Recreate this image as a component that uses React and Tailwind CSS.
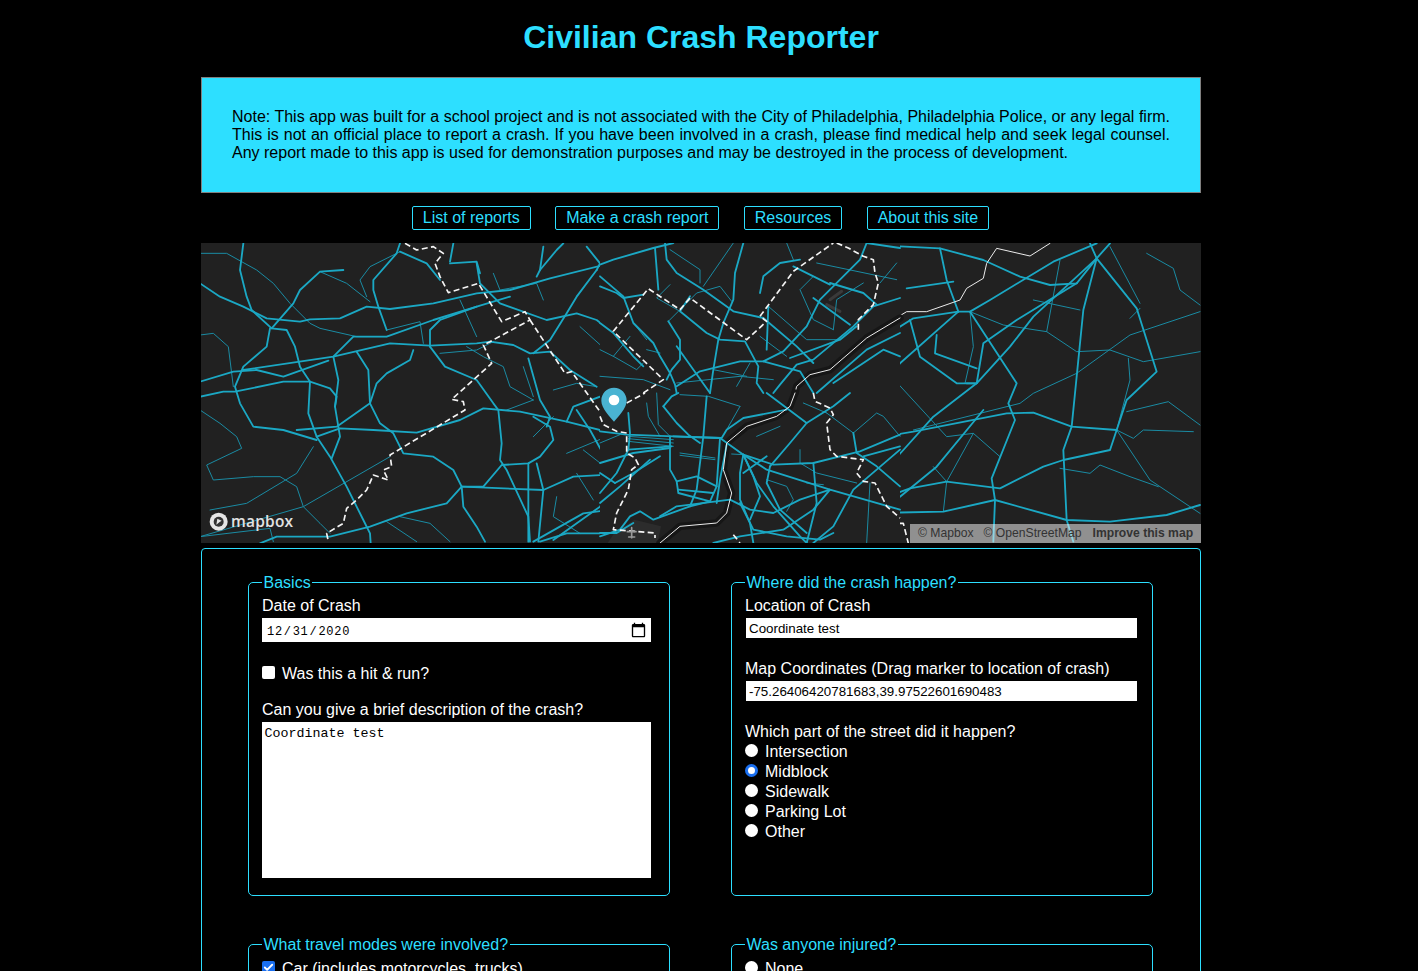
import React from 'react';
import { Check } from 'lucide-react';

// map traces, in 3x pixels of the map picture
const leftMajor = [
  'M0 130L60 170L130 200L200 235L300 245L330 238L420 235L500 200L570 207L700 190L830 160L930 150L1050 115L1210 75L1400 15',
  'M0 425L100 395L170 390L250 410L385 362',
  'M0 470L70 455L105 455L250 425L330 425L390 445L410 470L405 500',
  'M130 390L400 350L570 310L690 317L830 310L870 305L940 315L990 340L1050 335L1110 390L1190 440',
  'M130 10L120 90L140 170L155 210L215 265L260 270L285 320L300 380L330 425L325 520L350 590L390 650L440 740L490 840L510 880L512 910',
  'M210 265L200 320L130 380L105 440L120 490L160 560L250 570L350 600',
  'M430 90L360 95L300 150L280 190L215 265',
  'M560 270L535 200L520 150L520 120L590 40L600 10',
  'M350 590L420 565L520 570L650 578L780 540L850 505L960 515L1100 545L1280 590',
  'M400 350L415 420L405 500L420 590L395 655',
  'M400 350L460 290L560 290L700 240L830 200L930 170',
  'M470 335L505 390L510 490L540 550L580 580L610 640L700 650L760 690L785 740L790 800L830 860L855 905',
  'M640 330L630 360L560 400L530 430L510 490L410 560L290 570',
  'M690 320L735 380L830 420L880 490L895 510L905 610L900 660L920 690L985 830L990 905',
  'M690 320L690 270L720 240L830 200',
  'M1000 530L1050 560L1060 600L1020 650L985 670L905 675L850 740L785 740L740 790L620 820L510 860L390 890L230 890L180 910',
  'M985 670L985 780L985 905',
  'M1010 670L1030 750L1015 905',
  'M985 355L1020 480L1050 530L1040 560',
  'M785 740L1030 750L1120 710L1290 700L1390 620',
  'M1100 545L1120 500L1200 470',
  'M1130 510L1170 570L1220 660L1240 740L1300 800L1500 720',
  'M1060 900L1200 800L1240 740',
  'M830 70L840 130L900 190L1040 240L1130 220L1190 240L1280 310',
  'M750 70L830 65L840 100',
  'M600 35L680 70L720 120',
  'M760 10L750 65',
  'M1190 90L1130 170L1100 220L1050 300L1000 340',
  'M1160 20L1200 70L1190 90',
  'M1020 90L1070 30L1090 10',
  'M1030 20L1020 90L1010 110',
  'M1000 905L1150 820L1300 800',
  'M1240 880L1100 880L1020 905',
];
const leftMinor = [
  'M0 40L80 40L170 90L220 130L270 190L330 250L360 265L470 290L560 290',
  'M0 285L40 280L85 320L100 440',
  'M0 510L60 550L110 590L125 625L20 675L40 720L160 710L240 710L290 740L310 800L360 850L390 880',
  'M360 95L440 130L510 185',
  'M600 35L510 80L480 120L500 170',
  'M560 270L660 245L670 310',
  'M720 340L830 330L880 305',
  'M800 320L850 350L910 380L930 440L1000 480',
  'M1000 480L920 510',
  'M970 380L1000 470',
  'M1060 450L1130 430L1190 440',
  'M1000 590L1060 530',
  'M600 830L690 850L750 905',
  'M560 845L650 905',
  'M0 890L210 865L220 905',
  'M340 620L290 700L140 790L30 810',
  'M570 650L310 800L0 890',
  'M1100 640L1220 590',
  'M1150 630L1240 700',
  'M1070 770L1060 830L1140 880',
  'M1130 700L1180 780',
  'M1140 260L1240 350',
  'M880 100L900 150L1010 130L1030 180',
  'M780 180L830 290',
];
const rightMajor = [
  'M510 15L720 25L850 60L960 110L1050 135L1130 130L1190 55L1230 10',
  'M1170 10L1190 55L1310 205L1370 395L1280 480L1250 570L1230 630L1090 660L1030 680L900 745L740 725L630 745L550 775',
  'M1190 55L1150 210L1115 560L1090 630L1100 840L1120 905',
  'M1190 55L1000 230L930 320L830 430L700 530L610 630L480 770',
  'M1130 130L950 240L850 310L830 430L800 430',
  'M775 215L810 215L870 180L1060 65L1190 10',
  'M775 215L640 235L600 260',
  'M775 215L600 370',
  'M810 215L950 430L925 490L945 540L875 715L885 780L880 905',
  'M775 215L740 120L720 25',
  'M760 125L620 145',
  'M580 585L640 575L920 520L1000 518L1115 560L1250 570',
  'M600 770L710 680L850 510',
  'M1500 795L1400 825L1230 845L1100 840L885 780L730 815L580 818',
  'M710 285L705 340L830 385',
  'M630 240L660 350L770 430L830 430',
];
const rightMinor = [
  'M1230 20L1320 190',
  'M1340 40L1420 85L1440 150L1500 195',
  'M1500 215L1290 285L1130 400L1000 460L960 490L640 570',
  'M1500 335L1330 365L1230 330L1130 335L1040 275L910 255L810 215',
  'M1285 355L1290 420L1250 570L1350 720L1500 820',
  'M1500 555L1405 485L1280 515',
  'M1250 570L1300 595L1330 570L1480 575',
  'M1375 740L1290 710L1200 675L1170 700L1080 685',
  'M600 370L560 530',
  'M570 405L740 590L820 580L740 725',
  'M700 680L740 725L730 815',
  'M810 215L820 320L795 430',
  'M1000 180L1140 210',
  'M820 580L900 650',
  'M1040 275L1080 60',
  'M1320 205L1290 235',
];
const topMajor = [
  'M0 65L40 50L160 15L220 0',
  'M195 0L200 50L230 90L310 140L400 205L490 225L590 310L640 360',
  'M430 0L405 90L400 170L370 240L355 290L340 380L330 450',
  'M0 100L70 160L100 240L160 300L180 340L210 390L225 425L230 450',
  'M0 240L40 270L100 340L130 370',
  'M230 430L300 385L420 355L490 355L550 325L620 250L660 170L780 50L800 0',
  'M800 0L900 15',
  'M0 130L50 150L70 165L130 155',
  'M205 235L240 290L240 350L215 380L200 410',
  'M270 160L240 205L320 270L360 290L435 295L475 370L470 420L490 450',
  'M490 355L600 385L640 450',
  'M480 150L490 100L540 60L600 50',
  'M505 190L500 320',
  'M900 165L820 190L760 250L640 350L590 365L540 425L520 450',
  'M640 165L750 245',
  'M690 120L790 150L830 185',
  'M580 70L690 125',
  'M570 345L720 290L770 250',
  'M900 270L800 320L650 450',
  'M900 340L850 320L700 420',
  'M165 15L175 140',
  'M230 310L330 450',
];
const topMinor = [
  'M205 235L290 150L360 130L395 175',
  'M210 20L300 80L300 120','M400 0L310 130','M210 125L170 165L240 205',
  'M0 320L40 340L90 280','M40 340L110 380L130 360','M180 330L140 320','M100 240L140 290',
  'M230 420L420 400L520 410','M340 380L440 400','M450 360L410 430','M480 280L560 340',
  'M640 100L600 140L640 230L700 260','M700 260L710 170L790 120','M0 400L130 410L210 440',
  'M650 60L890 110','M890 60L840 120','M560 0L580 50','M505 190L620 290L720 290',
];
const bottomMajor = [
  'M0 115L80 125L220 130L360 135L430 185',
  'M430 185L500 230L690 290L900 350',
  'M430 185L470 270L520 340L600 430L620 450',
  'M430 185L420 240L420 320L450 390L460 450',
  'M430 185L460 250L480 310L450 380',
  'M430 185L520 215L640 210L780 175L900 125',
  'M220 130L365 135L380 110L430 75L560 50',
  'M190 40L215 10L235 0','M190 40L230 90L265 125L300 150',
  'M320 10L310 130L290 290L270 340',
  'M360 135L350 280L330 325L270 340L160 380L120 355L90 370L60 410L0 430',
  'M210 130L210 230L230 265L235 300L330 325',
  'M230 265L290 250L350 280','M235 290L340 300',
  'M85 170L215 160','M0 210L100 180L210 165',
  'M85 60L90 120L85 170L50 240L0 300','M45 270L0 240','M45 270L100 240L180 190','M0 330L60 280L150 200',
  'M380 155L360 260L350 330',
  'M180 370L230 340L390 320L450 350L520 360L600 320L690 290',
  'M510 220L500 270L540 350L620 420',
  'M510 220L570 150L620 90L700 40L750 0',
  'M500 190L430 240',
  'M620 90L540 30L500 0',
  'M640 210L650 330L620 450',
  'M690 290L640 350L550 410L420 430L340 450',
  'M900 170L760 290L700 400L640 450',
  'M760 120L770 180L830 220L900 280',
  'M420 330L460 410L560 430L660 440L700 420',
  'M100 390L50 420L0 420',
  'M900 160L790 190',
];
const bottomMinor = [
  'M85 130L220 140','M85 137L220 150','M85 145L220 160',
  'M240 5L325 10L420 40','M240 180L345 195','M240 187L345 200','M395 183L430 185','M620 270L670 275',
  'M610 30L680 60','M680 60L760 120L830 60L850 70L900 130','M500 260L560 280L580 320L560 355',
  'M140 30L145 70L180 130','M600 170L600 210L650 240L770 270','M810 270L800 450',
  'M470 130L540 100','M0 150L60 125','M170 0L175 95L210 130','M420 40L380 110',
];
const dashed = [
  'M615 10L650 30L700 20L730 40L705 70L720 110L745 158L835 130L905 245L975 215L990 240L870 305L850 315L875 370L755 478L790 485L795 510L570 645L575 680L550 690L565 720L520 705L500 750L470 780L440 805L430 850L380 880L385 905',
  'M990 240L1095 400L1115 395L1200 515',
];
const dashedRight = [
  'M600 850L610 850L625 910',
];
const dashedTop = [
  'M130 450L190 410L40 265L145 137L240 200L270 165L440 290L500 235L480 220L580 85L700 0',
  'M710 0L745 15L790 40L820 50L825 90L835 120L820 185L775 230L775 265',
];
const dashedBottom = [
  'M640 0L645 25L690 45L700 65L680 90L690 170L710 190L790 200L770 240L790 265L825 270L860 340L900 375',
  'M0 70L10 95L50 115L80 120L80 180L105 195L115 215L95 230L85 290L50 360L40 410L165 420L165 435',
  'M80 30L135 0',
  'M400 425L420 450',
];
const riverRight = 'M1050 10L990 48L890 25L860 70L850 115L800 145L780 180L680 215L620 215L600 227';
const riverTop = 'M900 225L800 285L690 380L630 395L590 430L585 450';
const riverBottom = 'M585 0L570 40L530 70L440 100L380 150L370 230L395 300L380 360L350 390L240 400L180 450';

function Roads({ major, minor }) {
  return (
    <>
      <g stroke="#1a8ba3" strokeWidth="3">{minor.map((d) => <path key={d} d={d} />)}</g>
      <g stroke="#1ba8c4" strokeWidth="5.5">{major.map((d) => <path key={d} d={d} />)}</g>
    </>
  );
}

function Dashes({ paths }) {
  return <g stroke="#f5f5f5" strokeWidth="5" strokeDasharray="18 10" strokeLinecap="butt">{paths.map((d) => <path key={d} d={d} />)}</g>;
}

function River({ d }) {
  return <path d={d} stroke="#ececec" strokeWidth="3" />;
}

function MapView() {
  return (
    <div className="relative h-[300px] w-[1000px] overflow-hidden bg-[#212121]">
      <svg viewBox="0 0 3000 900" className="block h-full w-full" fill="none" strokeLinejoin="round" strokeLinecap="round">
        <defs>
          <clipPath id="outer">
            <rect x="0" y="0" width="1197" height="900" />
            <rect x="2097" y="0" width="903" height="900" />
          </clipPath>
        </defs>
        <path d="M1240 870L1300 830L1380 850L1370 900L1220 900Z" fill="#2c2c2c" stroke="none" />
        <g clipPath="url(#outer)">
          <g transform="translate(-3 -9)">
            <Roads major={leftMajor} minor={leftMinor} />
            <Dashes paths={dashed} />
          </g>
          <g transform="translate(1497 -9)">
            <Roads major={rightMajor} minor={rightMinor} />
            <River d={riverRight} />
            <Dashes paths={dashedRight} />
          </g>
        </g>
        <g transform="translate(1197 0)">
          <path d={riverTop} stroke="#161616" strokeWidth="22" />
          <path d="M690 170L725 145M680 185L720 205" stroke="#3a3a3a" strokeWidth="9" />
          <Roads major={topMajor} minor={topMinor} />
          <River d={riverTop} />
          <Dashes paths={dashedTop} />
        </g>
        <g transform="translate(1197 450)">
          <path d={riverBottom} stroke="#161616" strokeWidth="22" />
          <Roads major={bottomMajor} minor={bottomMinor} />
          <River d={riverBottom} />
          <Dashes paths={dashedBottom} />
          <path d="M95 404L95 434M82 416L108 416M86 432L104 432" stroke="#9a9a9a" strokeWidth="5" />
        </g>
        <g transform="translate(-3 -9)">
          <path d="M1242 443C1220 443 1204 460 1204 482C1204 505 1230 530 1242 545C1254 530 1280 505 1280 482C1280 460 1264 443 1242 443Z" fill="#4ab3d2" />
          <circle cx="1242" cy="480" r="16" fill="#fff" />
          <circle cx="56" cy="845" r="27" fill="#e6e6e6" />
          <circle cx="56" cy="845" r="15" fill="#333" />
          <path d="M49 854L52 836L65 842L58 847Z" fill="#e6e6e6" />
        </g>
      </svg>
      <span className="absolute left-[30px] top-[267px] font-['Open_Sans',sans-serif] text-[15.5px] font-semibold leading-[22px] tracking-[0.2px] text-[#e2e2e2]">mapbox</span>
      <div className="absolute bottom-0 right-0 flex h-[19px] w-[291px] items-center bg-white/50 pl-[8px] text-[12.15px] leading-[19px] text-[#333]">
        <span>© Mapbox</span>
        <span className="ml-[10px]">© OpenStreetMap</span>
        <span className="ml-[11px] font-bold">Improve this map</span>
      </div>
    </div>
  );
}

function Fieldset({ title, className, children }) {
  return (
    <fieldset className={`w-[422px] rounded-[5px] border border-[#2ddfff] pl-[13px] pr-[15px] ${className}`}>
      <legend className="px-[1.5px] pt-[2px] text-[16px] leading-[18px] text-[#2ddfff]">{title}</legend>
      {children}
    </fieldset>
  );
}

function Radio({ label, checked }) {
  return (
    <label className="flex h-[20px] items-center">
      <input
        type="radio"
        name="part"
        defaultChecked={checked}
        className="m-0 mb-[3px] h-[13px] w-[13px] appearance-none rounded-full bg-white checked:border-[3px] checked:border-[#1a6ff0]"
      />
      <span className="ml-[7px]">{label}</span>
    </label>
  );
}

function CheckBox({ label, checked }) {
  return (
    <label className="flex h-[18px] items-center">
      <span className="relative mb-[3px] flex h-[13px] w-[13px]">
        <input
          type="checkbox"
          defaultChecked={checked}
          className="m-0 h-[13px] w-[13px] appearance-none rounded-[2px] bg-white checked:bg-[#1a6ff0]"
        />
        {checked && <Check size={11} strokeWidth={4} className="absolute left-[1px] top-[1px] text-white" />}
      </span>
      <span className="ml-[7px]">{label}</span>
    </label>
  );
}

const navLinks = ['List of reports', 'Make a crash report', 'Resources', 'About this site'];

export default function App() {
  return (
    <div className="h-screen overflow-hidden bg-black font-['Liberation_Sans',Arial,sans-serif] text-[16px] leading-[18px] text-white">
      <div className="ml-[201px] w-[1000px]">
        <h1 className="pt-[19px] pb-[21px] text-center text-[32px] font-bold leading-[37px] text-[#2ddfff]">Civilian Crash Reporter</h1>

        <div className="border border-[#808080] bg-[#2ddfff] p-[30px] text-justify text-black">
          Note: This app was built for a school project and is not associated with the City of Philadelphia, Philadelphia Police, or any legal firm.
          This is not an official place to report a crash. If you have been involved in a crash, please find medical help and seek legal counsel.
          Any report made to this app is used for demonstration purposes and may be destroyed in the process of development.
        </div>

        <nav className="flex justify-center gap-[24.4px] py-[13px] pr-[1px]">
          {navLinks.map((l) => (
            <a key={l} href="#" className="block h-[24px] rounded-[2px] border border-[#2ddfff] px-[10px] leading-[22px] text-[#2ddfff]">{l}</a>
          ))}
        </nav>

        <MapView />

        <form className="mt-[5px] rounded-[4px] border border-[#2ddfff] pl-[46px] pr-[47px] pt-[23px] pb-[40px]">
          <div className="flex justify-between">
            <Fieldset title="Basics" className="h-[324px]">
              <label className="mt-[5px] block">Date of Crash</label>
              <input
                type="date"
                defaultValue="2020-12-31"
                className="mt-[3px] block h-[24px] w-[389px] bg-white px-[4px] pt-[3px] font-['Liberation_Mono',monospace] text-[12px] tracking-[0.7px] text-black [&::-webkit-calendar-picker-indicator]:m-0 [&::-webkit-calendar-picker-indicator]:-mt-[3px] [&::-webkit-calendar-picker-indicator]:h-[17px] [&::-webkit-calendar-picker-indicator]:w-[17px] [&::-webkit-calendar-picker-indicator]:p-0"
              />
              <div className="mt-[23px]"><CheckBox label="Was this a hit & run?" /></div>
              <label className="mt-[18px] block">Can you give a brief description of the crash?</label>
              <textarea
                defaultValue="Coordinate test"
                className="-ml-[0.5px] mt-[3px] block h-[156px] w-[389.5px] resize-none bg-white px-[3px] py-[4px] font-['Liberation_Mono',monospace] text-[13.33px] leading-[15px] text-black"
              />
            </Fieldset>

            <Fieldset title="Where did the crash happen?" className="h-[324px]">
              <label className="mt-[5px] block">Location of Crash</label>
              <input
                type="text"
                defaultValue="Coordinate test"
                className="ml-[0.5px] mt-[3px] block h-[20px] w-[391.5px] bg-white px-[3.5px] text-[13.33px] text-black"
              />
              <label className="mt-[22px] block">Map Coordinates (Drag marker to location of crash)</label>
              <input
                type="text"
                defaultValue="-75.26406420781683,39.97522601690483"
                className="ml-[0.5px] mt-[3px] block h-[20px] w-[391.5px] bg-white px-[3.5px] text-[13.33px] text-black"
              />
              <label className="mt-[22px] block">Which part of the street did it happen?</label>
              <div className="mt-[1px]">
                {['Intersection', 'Midblock', 'Sidewalk', 'Parking Lot', 'Other'].map((o) => (
                  <Radio key={o} label={o} checked={o === 'Midblock'} />
                ))}
              </div>
            </Fieldset>
          </div>

          <div className="mt-[38px] flex justify-between">
            <Fieldset title="What travel modes were involved?" className="h-[200px]">
              <div className="mt-[6px]"><CheckBox label="Car (includes motorcycles, trucks)" checked /></div>
            </Fieldset>
            <Fieldset title="Was anyone injured?" className="h-[200px]">
              <div className="mt-[5px]"><Radio label="None" /></div>
            </Fieldset>
          </div>
        </form>
      </div>
    </div>
  );
}
